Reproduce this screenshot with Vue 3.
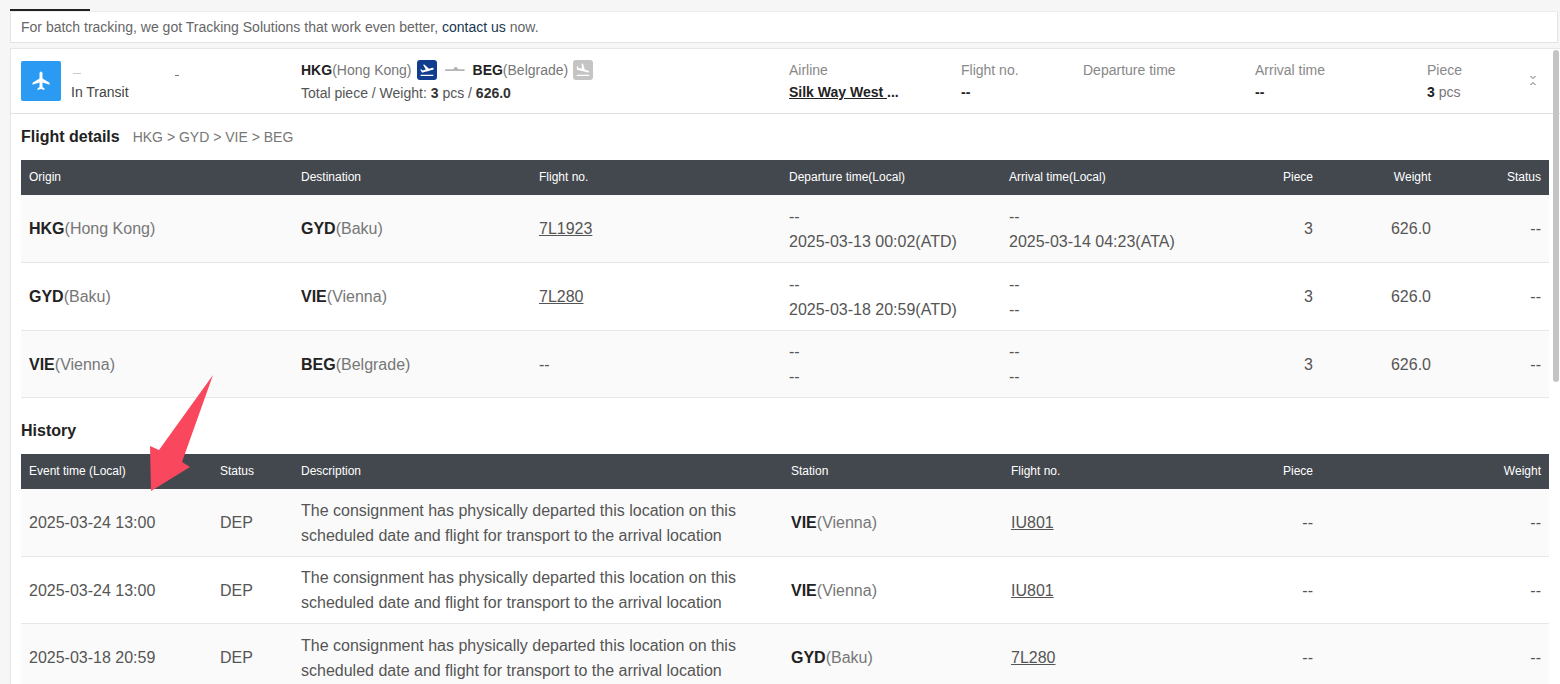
<script setup>
const flights = [
  { o: 'HKG', on: '(Hong Kong)', d: 'GYD', dn: '(Baku)', no: '7L1923', dep: ['--', '2025-03-13 00:02(ATD)'], arr: ['--', '2025-03-14 04:23(ATA)'] },
  { o: 'GYD', on: '(Baku)', d: 'VIE', dn: '(Vienna)', no: '7L280', dep: ['--', '2025-03-18 20:59(ATD)'], arr: ['--', '--'] },
  { o: 'VIE', on: '(Vienna)', d: 'BEG', dn: '(Belgrade)', no: '', dep: ['--', '--'], arr: ['--', '--'] }
]
const history = [
  { t: '2025-03-24 13:00', s: 'VIE', sn: '(Vienna)', no: 'IU801' },
  { t: '2025-03-24 13:00', s: 'VIE', sn: '(Vienna)', no: 'IU801' },
  { t: '2025-03-18 20:59', s: 'GYD', sn: '(Baku)', no: '7L280' }
]
const plane = 'M12 2.500c.9 0 1.500 1 1.500 2.200V9.600l7 4.200v1.900l-7-2.200v4.600l2 1.500v1.500L12 20l-3.500 1.100v-1.500l2-1.500v-4.600l-7 2.200v-1.900l7-4.200V4.700c0-1.200.6-2.200 1.500-2.200z'
const takeoff = 'M2.500 19h19v2h-19zm19.570-9.360c-.21-.8-1.040-1.280-1.840-1.060L14.920 10l-6.900-6.430-1.930.51 4.140 7.170-4.970 1.330-1.970-1.540-1.450.39 2.590 4.490s7.120-1.900 16.570-4.430c.81-.23 1.280-1.050 1.070-1.850z'
const landing = 'M2.500 19h19v2h-19zm7.180-5.730l4.350 1.160 5.310 1.420c.8.21 1.620-.26 1.840-1.060.21-.8-.26-1.620-1.060-1.840l-5.310-1.420-2.760-9.020L10.120 2v8.280L5.150 8.950l-.93-2.320-1.450-.39v5.170l1.600.43 5.310 1.430z'
</script>

<template>
  <div class="page">
    <div class="tab"></div>
    <div class="notice">For batch tracking, we got Tracking Solutions that work even better, <a class="contact">contact us</a> now.</div>

    <section class="card">
      <div class="summary">
        <div class="sum-main">
          <div class="badge">
            <svg viewBox="0 0 24 24" width="24" height="24"><path :d="plane" fill="#fff" /></svg>
          </div>
          <div class="status-block">
            <div class="redacted"><i></i><em></em></div>
            <div class="status-text">In Transit</div>
          </div>
        </div>
        <div class="sum-route">
          <div class="route-line">
            <b>HKG</b><span class="muted">(Hong Kong)</span>
            <span class="mini blue">
              <svg viewBox="0 0 24 24" width="16" height="16"><path :d="takeoff" fill="#fff"/></svg>
            </span>
            <svg class="mid-plane" viewBox="0 0 20 10" width="20" height="10"><path d="M0 4.300h8l2-2.300h1.500l2 2.300H18c1 0 2 .4 2 .9s-1 .8-2 .8H0z" fill="#b5b5b5"/></svg>
            <b>BEG</b><span class="muted">(Belgrade)</span>
            <span class="mini gray">
              <svg viewBox="0 0 24 24" width="16" height="16"><path :d="landing" fill="#fff"/></svg>
            </span>
          </div>
          <div class="weight-line">Total piece / Weight: <b>3</b> pcs / <b>626.0</b></div>
        </div>
        <div class="sum-col w-airline"><div class="lbl">Airline</div><div class="val"><b class="ul">Silk Way West </b><b>...</b></div></div>
        <div class="sum-col w-flight"><div class="lbl">Flight no.</div><div class="val"><b>--</b></div></div>
        <div class="sum-col w-dep"><div class="lbl">Departure time</div><div class="val"></div></div>
        <div class="sum-col w-arr"><div class="lbl">Arrival time</div><div class="val"><b>--</b></div></div>
        <div class="sum-col w-piece"><div class="lbl">Piece</div><div class="val"><b>3</b> <span class="muted">pcs</span></div></div>
        <svg class="chev" viewBox="0 0 8 11" width="8" height="11"><path d="M1.500 1l2.500 2.500L6.500 1M1.500 10L4 7.500 6.500 10" fill="none" stroke="#666" stroke-width="1"/></svg>
      </div>

      <div class="body">
        <div class="heading">
          <h3>Flight details</h3>
          <span class="path">HKG &gt; GYD &gt; VIE &gt; BEG</span>
        </div>

        <div class="thead grid-f">
          <span>Origin</span><span>Destination</span><span>Flight no.</span><span>Departure time(Local)</span><span>Arrival time(Local)</span>
          <span class="r">Piece</span><span class="r">Weight</span><span class="r">Status</span>
        </div>
        <div v-for="(f, i) in flights" :key="i" class="row grid-f" :class="{ alt: i !== 1, short: i === 2 }">
          <span><b>{{ f.o }}</b><span class="muted">{{ f.on }}</span></span>
          <span><b>{{ f.d }}</b><span class="muted">{{ f.dn }}</span></span>
          <span><a v-if="f.no" class="ul">{{ f.no }}</a><template v-else>--</template></span>
          <span class="two"><span>{{ f.dep[0] }}</span><span>{{ f.dep[1] }}</span></span>
          <span class="two"><span>{{ f.arr[0] }}</span><span>{{ f.arr[1] }}</span></span>
          <span class="r">3</span><span class="r">626.0</span><span class="r">--</span>
        </div>

        <h3 class="history-title">History</h3>
        <div class="thead grid-h">
          <span>Event time (Local)</span><span>Status</span><span>Description</span><span>Station</span><span>Flight no.</span>
          <span class="r">Piece</span><span class="r">Weight</span>
        </div>
        <div v-for="(h, i) in history" :key="i" class="row grid-h" :class="{ alt: i !== 1, short: i === 1 }">
          <span>{{ h.t }}</span>
          <span>DEP</span>
          <span class="two"><span>The consignment has physically departed this location on this</span><span>scheduled date and flight for transport to the arrival location</span></span>
          <span><b>{{ h.s }}</b><span class="muted">{{ h.sn }}</span></span>
          <span><a class="ul">{{ h.no }}</a></span>
          <span class="r">--</span><span class="r">--</span>
        </div>
      </div>
    </section>

    <div class="scroll-thumb"></div>
    <svg class="arrow" width="1560" height="684" viewBox="0 0 1560 684">
      <path d="M213 375 L159 450 L150 446 L151 491 L190 467 L182 462 Z" fill="#f9475e"/>
    </svg>
  </div>
</template>

<style>
html, body { margin: 0; overflow: hidden; background: #f5f5f5; }
</style>

<style scoped>
.page {
  position: relative;
  width: 1560px;
  height: 684px;
  overflow: hidden;
  padding: 9px 0 0 10px;
  box-sizing: border-box;
  background: #f6f6f6;
  font-family: "Liberation Sans", Arial, sans-serif;
  color: #444;
  font-size: 14px;
}
.tab { width: 80px; height: 2px; background: #222; }
.notice {
  height: 30px;
  line-height: 30px;
  padding-left: 10px;
  background: #fff;
  border: 1px solid #e3e3e3;
  border-top-color: #ececec;
  margin-right: 2px;
  color: #666;
}
.contact { color: #17364f; }
.card {
  margin-top: 5px;
  background: #fff;
  border: 1px solid #e6e6e6;
  border-right: 0;
  height: 700px;
}
.summary {
  display: flex;
  align-items: center;
  height: 64px;
  border-bottom: 1px solid #e2e2e2;
  padding-left: 10px;
  box-sizing: content-box;
  position: relative;
}
.sum-main { display: flex; width: 280px; align-items: center; gap: 10px; }
.badge {
  width: 40px; height: 40px; border-radius: 2px; background: #2b9af3;
  display: flex; align-items: center; justify-content: center;
}
.status-block { display: flex; flex-direction: column; gap: 7px; }
.redacted { height: 14px; width: 110px; position: relative; }
.redacted i { position: absolute; right: 2px; top: 12px; width: 4px; height: 1px; background: #777; }
.redacted em { position: absolute; left: 2px; top: 10px; width: 8px; height: 1px; background: #ccc; }
.status-text { color: #444; line-height: 16px; }
.sum-route { width: 488px; display: flex; flex-direction: column; gap: 5px; margin-bottom: 1px; }
.route-line { display: flex; align-items: center; height: 20px; line-height: 20px; }
.weight-line { line-height: 16px; color: #555; }
.weight-line b { color: #333; }
b { color: #222; font-weight: 700; }
.muted { color: #777; }
.mini {
  width: 20px; height: 20px; border-radius: 3px; margin-left: 5px;
  display: flex; align-items: center; justify-content: center;
}
.blue { background: #103d8d; }
.gray { background: #c4c4c4; }
.mid-plane { margin: 0 8px 0 8px; }
.sum-col { display: flex; flex-direction: column; gap: 4px; margin-bottom: 2px; }
.lbl { color: #888; height: 20px; line-height: 20px; }
.val { height: 16px; line-height: 16px; color: #888; white-space: nowrap; }
.w-airline { width: 172px; }
.w-flight { width: 122px; }
.w-dep { width: 172px; }
.w-arr { width: 172px; }
.w-piece { width: 90px; }
.chev { position: absolute; left: 1518px; top: 26px; }
.ul { text-decoration: underline; color: inherit; }
b.ul { color: #222; }
.body { padding: 0 10px; width: 1528px; }
.heading { display: flex; align-items: baseline; gap: 13px; height: 46px; padding-top: 13px; box-sizing: border-box; }
h3 { margin: 0; font-size: 16px; line-height: 20px; color: #222; font-weight: 700; }
.path { color: #777; }
.thead {
  height: 35px;
  background: #43484e;
  color: #fff;
  font-size: 12px;
  align-items: center;
  padding-bottom: 2px;
}
.grid-f, .grid-h { display: grid; padding-left: 8px; padding-right: 8px; box-sizing: border-box; }
.grid-f { grid-template-columns: 272px 238px 250px 220px 216px 88px 118px 110px; }
.grid-h { grid-template-columns: 191px 81px 490px 220px 214px 88px 228px; }
.r { text-align: right; }
.row {
  align-items: center;
  height: 68px;
  padding-top: 1px;
  font-size: 16px;
  color: #555;
  border-bottom: 1px solid #e6e6e6;
  box-sizing: border-box;
}
.row.short { height: 67px; }
.row.alt { background: #fafafa; }
.two { display: flex; flex-direction: column; gap: 3px; line-height: 22px; white-space: nowrap; }
.history-title { margin: 23px 0 13px; }
.scroll-thumb {
  position: absolute; left: 1553px; top: 50px; width: 6px; height: 332px;
  background: #c4c4c4; border-radius: 3px;
}
.arrow { position: absolute; left: 0; top: 0; pointer-events: none; }
</style>
